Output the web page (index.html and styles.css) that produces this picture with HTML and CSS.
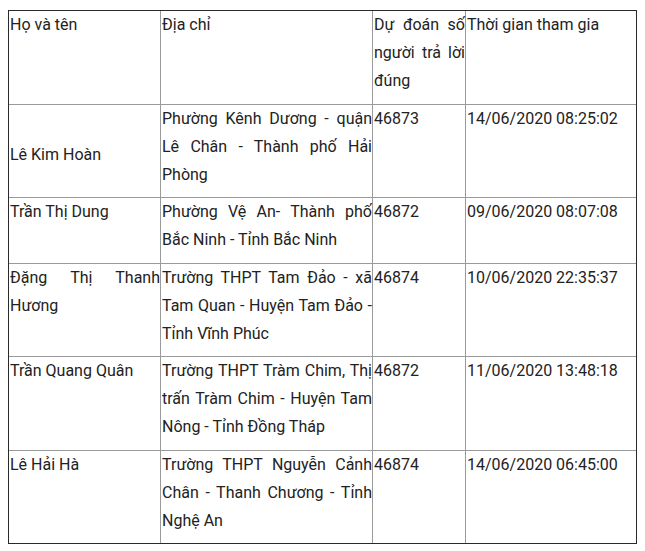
FILE: index.html
```html
<!DOCTYPE html>
<html lang="vi">
<head>
<meta charset="utf-8">
<title>Bảng</title>
<link rel="stylesheet" href="styles.css">
</head>
<body>
<table class="grid">
  <colgroup>
    <col class="c1"><col class="c2"><col class="c3"><col class="c4">
  </colgroup>
  <tr>
    <td>Họ và tên</td>
    <td>Địa chỉ</td>
    <td>Dự đoán số người trả lời đúng</td>
    <td>Thời gian tham gia</td>
  </tr>
  <tr>
    <td class="mid">Lê Kim Hoàn</td>
    <td>Phường Kênh Dương - quận Lê Chân - Thành phố Hải Phòng</td>
    <td>46873</td>
    <td>14/06/2020 08:25:02</td>
  </tr>
  <tr>
    <td>Trần Thị Dung</td>
    <td>Phường Vệ An- Thành phố Bắc Ninh - Tỉnh Bắc Ninh</td>
    <td>46872</td>
    <td>09/06/2020 08:07:08</td>
  </tr>
  <tr>
    <td>Đặng Thị Thanh Hương</td>
    <td>Trường THPT Tam Đảo - xã Tam Quan - Huyện Tam Đảo - Tỉnh Vĩnh Phúc</td>
    <td>46874</td>
    <td>10/06/2020 22:35:37</td>
  </tr>
  <tr>
    <td>Trần Quang Quân</td>
    <td>Trường THPT Tràm Chim, Thị trấn Tràm Chim - Huyện Tam Nông - Tỉnh Đồng Tháp</td>
    <td>46872</td>
    <td>11/06/2020 13:48:18</td>
  </tr>
  <tr>
    <td>Lê Hải Hà</td>
    <td>Trường THPT Nguyễn Cảnh Chân - Thanh Chương - Tỉnh Nghệ An</td>
    <td>46874</td>
    <td>14/06/2020 06:45:00</td>
  </tr>
</table>
</body>
</html>
```

FILE: styles.css
```css
html, body {
  background: #fff;
}
body {
  margin: 10px 8px;
  font-family: Roboto, "Noto Sans", sans-serif;
  font-size: 16px;
  color: #222;
}
.grid {
  border-collapse: separate;
  border-spacing: 0;
  border: 1px solid #2a2a2a;
  table-layout: fixed;
  width: 629px;
}
.c1 { width: 152px; }
.c2 { width: 212px; }
.c3 { width: 93px; }
.c4 { width: 170px; }
.grid td {
  vertical-align: top;
  text-align: justify;
  line-height: 28px;
  padding: 0 0 8.5px 1px;
  border-right: 1px solid #9a9a9a;
  border-bottom: 1px solid #9a9a9a;
}
.grid td:last-child {
  border-right: none;
}
.grid tr:last-child td {
  border-bottom: none;
}
.grid td.mid {
  padding-top: 36.5px;
}
```
